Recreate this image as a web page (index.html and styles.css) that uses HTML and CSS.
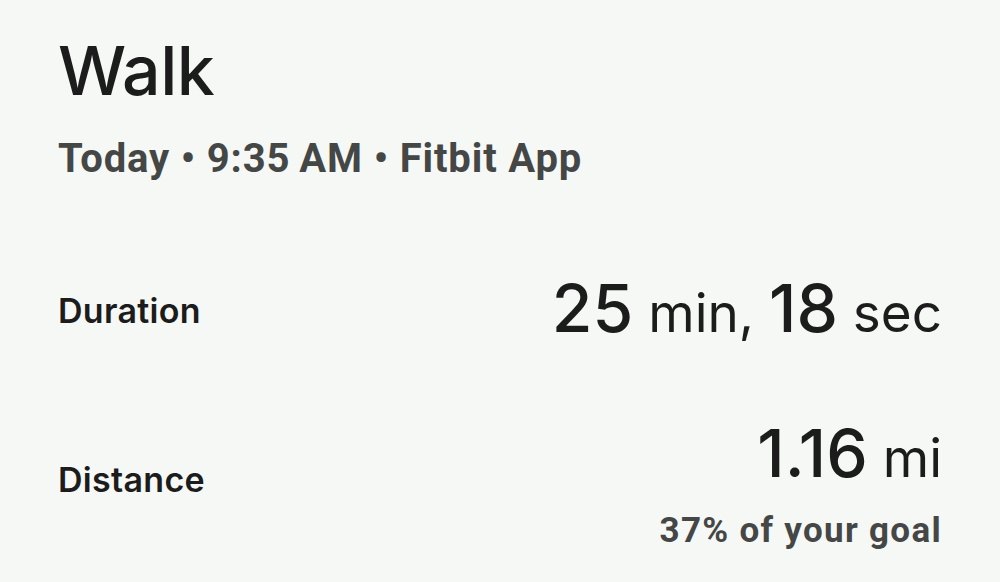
FILE: index.html
```html
<!DOCTYPE html>
<html>
<head>
<meta charset="utf-8">
<link rel="stylesheet" href="styles.css">
</head>
<body>
<main class="page">
  <header class="head">
    <h1 class="title">Walk</h1>
    <p class="meta">Today • 9:35&#8201;AM • Fitbit App</p>
  </header>
  <section class="stats">
    <div class="row row-duration">
      <span class="label">Duration</span>
      <div class="value-col">
        <span class="value"><span class="num">25</span> min, <span class="num">18</span> sec</span>
      </div>
    </div>
    <div class="row row-distance">
      <span class="label label-distance">Distance</span>
      <div class="value-col">
        <span class="value"><span class="num">1.16</span> mi</span>
        <span class="goal">37% of your goal</span>
      </div>
    </div>
  </section>
</main>
</body>
</html>
```
FILE: styles.css
```css
html, body {
  margin: 0;
  padding: 0;
  background: #f6f8f6;
}
body {
  width: 1000px;
  height: 582px;
  overflow: hidden;
}
.page {
  padding: 28px 58px 0 58px;
  display: flex;
  flex-direction: column;
}
.head {
  display: flex;
  flex-direction: column;
}
.title {
  margin: 0;
  font-family: Inter, "Open Sans", sans-serif;
  font-weight: 500;
  font-size: 68px;
  line-height: 84px;
  color: #1b1c1b;
  letter-spacing: -0.5px;
}
.meta {
  margin: 24px 0 0 0;
  font-family: Roboto, sans-serif;
  font-weight: 700;
  font-size: 40px;
  line-height: 46px;
  letter-spacing: 0.85px;
  color: #444746;
}
.stats {
  display: flex;
  flex-direction: column;
  margin-top: 96px;
}
.row {
  display: flex;
  justify-content: space-between;
  align-items: center;
}
.row-distance {
  margin-top: 80px;
}
.label {
  font-family: Inter, sans-serif;
  font-weight: 600;
  font-size: 34px;
  letter-spacing: 0.3px;
  color: #1b1c1b;
}
.label-distance {
  margin-bottom: 15px;
}
.value-col {
  display: flex;
  flex-direction: column;
  align-items: flex-end;
}
.value {
  font-family: Inter, sans-serif;
  font-weight: 400;
  font-size: 53px;
  line-height: 60px;
  color: #1b1c1b;
}
.num {
  font-size: 66px;
  font-weight: 500;
}
.goal {
  margin-top: 23px;
  font-family: Roboto, sans-serif;
  font-weight: 700;
  font-size: 35px;
  line-height: 40px;
  letter-spacing: 1.3px;
  color: #444746;
}
```
